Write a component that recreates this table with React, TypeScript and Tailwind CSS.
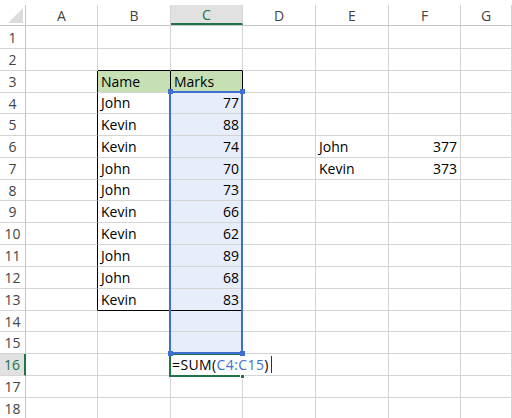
import React from "react";

const COLS = ["A", "B", "C", "D", "E", "F", "G"];
const COL_W = ["w-[72px]", "w-[73px]", "w-[72px]", "w-[73px]", "w-[73px]", "w-[72px]", "flex-1"];

// box heights including the bottom grid line
const ROW_H: Record<number, string> = {
  1: "h-[23px]",
  2: "h-[22px]",
  3: "h-[22px]",
  4: "h-[21px]",
  5: "h-[22px]",
  6: "h-[22px]",
  7: "h-[22px]",
  8: "h-[21px]",
  9: "h-[22px]",
  10: "h-[22px]",
  11: "h-[22px]",
  12: "h-[22px]",
  13: "h-[22px]",
  14: "h-[21px]",
  15: "h-[22px]",
  16: "h-[22px]",
  17: "h-[22px]",
  18: "h-[22px]",
};

const marks: [string, number][] = [
  ["John", 77],
  ["Kevin", 88],
  ["Kevin", 74],
  ["John", 70],
  ["John", 73],
  ["Kevin", 66],
  ["Kevin", 62],
  ["John", 89],
  ["John", 68],
  ["Kevin", 83],
];

const totals: Record<number, [string, number]> = {
  6: ["John", 377],
  7: ["Kevin", 373],
};

function cellValue(row: number, col: number): { text: string; right?: boolean } | null {
  if (row === 3 && col === 1) return { text: "Name" };
  if (row === 3 && col === 2) return { text: "Marks" };
  if (row >= 4 && row <= 13) {
    const [name, mark] = marks[row - 4];
    if (col === 1) return { text: name };
    if (col === 2) return { text: String(mark), right: true };
  }
  if (totals[row]) {
    if (col === 4) return { text: totals[row][0] };
    if (col === 5) return { text: String(totals[row][1]), right: true };
  }
  return null;
}

function Cell({ row, col }: { row: number; col: number }) {
  const v = cellValue(row, col);

  // table outline B3:C13
  const blackBottom = (row === 2 || row === 13) && (col === 1 || col === 2);
  const blackRight =
    (col === 0 && row >= 3 && row <= 13) || (row === 3 && (col === 1 || col === 2));

  const header = row === 3 && (col === 1 || col === 2);
  const selected = col === 2 && row >= 4 && row <= 15;

  return (
    <div
      className={`${COL_W[col]} shrink-0 h-full border-r border-b flex items-center px-[3px] text-black ${
        blackBottom ? "border-b-black" : "border-b-[#d4d4d4]"
      } ${blackRight ? "border-r-black" : "border-r-[#d4d4d4]"} ${
        header ? "bg-[#c6e0b4]" : selected ? "bg-[#e8eef9]" : "bg-white"
      } ${v?.right ? "justify-end" : "justify-start"}`}
    >
      {v && <span className="leading-none">{v.text}</span>}
    </div>
  );
}

function Row({ row }: { row: number }) {
  const active = row === 16;
  return (
    <div className={`flex ${ROW_H[row]}`}>
      <div
        className={`w-[26px] shrink-0 h-full border-b border-b-[#d4d4d4] flex items-center justify-center ${
          active
            ? "bg-[#e1e1e1] text-[#217346] border-r-2 border-r-[#217346]"
            : "border-r border-r-[#c6c6c6] text-[#444]"
        }`}
      >
        {row}
      </div>
      {COLS.map((_, c) => (
        <Cell key={c} row={row} col={c} />
      ))}
    </div>
  );
}

export default function App() {
  const rows = Array.from({ length: 18 }, (_, i) => i + 1);

  return (
    <div
      className="relative w-[512px] h-[418px] overflow-hidden bg-white text-[14px]"
      style={{ fontFamily: '"Open Sans", "Noto Sans", sans-serif' }}
    >
      <div className="h-[5px]" />
      {/* Column headers */}
      <div className="flex h-[21px] border-b border-b-[#c6c6c6]">
        <div className="w-[26px] shrink-0 h-full border-r border-r-[#c6c6c6]">
          <svg width="25" height="20" viewBox="0 0 25 20">
            <polygon points="8,18 23,3 23,18" fill="#dcdcdc" />
          </svg>
        </div>
        {COLS.map((c, i) => (
          <div
            key={c}
            className={`${COL_W[i]} shrink-0 h-full border-r border-r-[#d4d4d4] flex items-center justify-center ${
              c === "C"
                ? "bg-[#e1e1e1] text-[#217346] border-b-2 border-b-[#217346] -mb-px"
                : "text-[#444]"
            }`}
          >
            {c}
          </div>
        ))}
      </div>

      {rows.map((r) => (
        <Row key={r} row={r} />
      ))}

      {/* Formula edit box on C16 */}
      <div className="absolute left-[171px] top-[354px] w-[101px] h-[21px] bg-white flex items-center pl-[1px] tracking-[0.4px]">
        <span className="leading-none text-black">=SUM(</span>
        <span className="leading-none text-[#3f6fd1]">C4:C15</span>
        <span className="leading-none text-black">)</span>
        <span className="ml-[2px] w-px h-[17px] bg-[#333]" />
      </div>
      <div className="absolute left-[169px] top-[353px] w-[74px] h-[24px] border-t-2 border-b-2 border-l-2 border-[#217346]" />
      <div className="absolute left-[240px] top-[374px] w-[5px] h-[5px] bg-[#217346] border border-white" />

      {/* Referenced range C4:C15 */}
      <div className="absolute left-[169px] top-[91px] w-[74px] h-[263px] border-2 border-[#3f6fd1]" />
      <div className="absolute left-[168px] top-[89px] w-[5px] h-[5px] bg-[#3f6fd1]" />
      <div className="absolute left-[240px] top-[89px] w-[5px] h-[5px] bg-[#3f6fd1]" />
      <div className="absolute left-[168px] top-[351px] w-[5px] h-[5px] bg-[#3f6fd1]" />
      <div className="absolute left-[240px] top-[351px] w-[5px] h-[5px] bg-[#3f6fd1]" />
    </div>
  );
}
